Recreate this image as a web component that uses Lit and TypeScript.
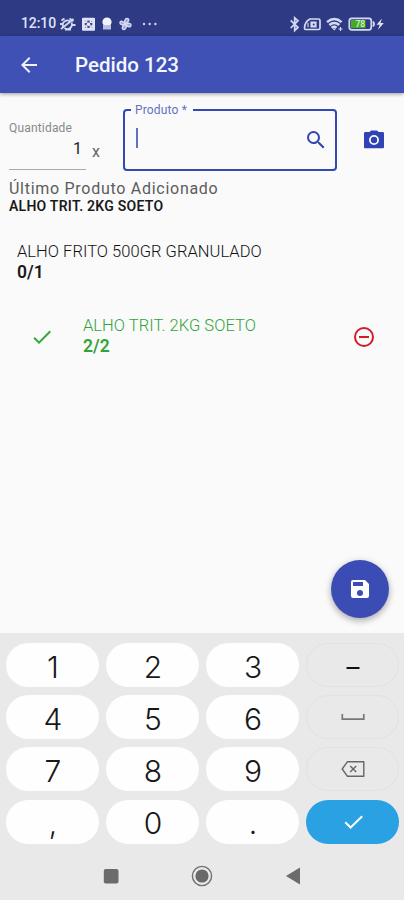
import { LitElement, html, css } from "lit";
import { customElement } from "lit/decorators.js";

const KEYS = ["1", "2", "3", "minus", "4", "5", "6", "space", "7", "8", "9", "erase", ",", "0", ".", "enter"];

const glyphs: Record<string, unknown> = {
  minus: html`<svg width="40" height="30" viewBox="0 0 40 30"><path d="M13.5 18h13" stroke="#111" stroke-width="2" /></svg>`,
  space: html`<svg width="40" height="30" viewBox="0 0 40 30"><path d="M9.300 12v5.200h21.500V12" fill="none" stroke="#777" stroke-width="1.700" /></svg>`,
  erase: html`<svg width="40" height="30" viewBox="0 0 40 30" fill="none" stroke="#666" stroke-width="1.400"><path d="M14.500 7.700h16.300v14.600H14.500L9.200 15z" stroke-linejoin="round" /><path d="m17.200 12 6 6m0-6-6 6" /></svg>`,
  enter: html`<svg width="40" height="30" viewBox="0 0 40 30"><path d="m12.300 15.200 5.300 5.300L29.200 9.200" fill="none" stroke="#fff" stroke-width="2" /></svg>`,
};

@customElement("status-bar")
class StatusBar extends LitElement {
  static styles = css`
    :host { display: flex; justify-content: space-between; height: 36px; box-sizing: border-box; padding: 11px 19px 0 21px; background: #2e3b84; color: #dfe3f8; font: 500 14px/25px Roboto, sans-serif; }
    .side { display: flex; align-items: center; height: 25px; }
    .time { width: 37px; letter-spacing: -0.100px; white-space: nowrap; }
    svg { display: block; flex: none; }
  `;
  render() {
    return html`
      <div class="side">
        <span class="time">12:10</span>
        <svg width="100" height="18" viewBox="58 14 100 18" fill="none" stroke="#d5daf3" stroke-width="1.800">
          <path d="M63 25.500a4.600 4.600 0 0 1 7.500-4.800M71.500 21.500a4.600 4.600 0 0 1-7 5.500M61.500 19.500l3-2M69.500 17.500l4 2.800M60 23h2.500M72.500 24h3M61 28l12.500-10M65 28.500h6" />
          <rect x="82" y="16.800" width="13" height="13" rx="1" fill="#dfe3f8" stroke="none" />
          <path d="M88.500 19.500v7.500M84.800 23.200h7.500" stroke="#3c4888" stroke-width="2.200" />
          <circle cx="88.500" cy="23.200" r="1.700" fill="#eef" stroke="none" />
          <path d="m85 19.500 1 1m5.200 5.200 1 1M85 27l1-1m5.200-5.200 1-1" stroke="#8089b8" stroke-width="1" />
          <circle cx="107" cy="21" r="4.600" fill="#f1f3fb" stroke="none" />
          <path d="M103 24v4.500h8V24" fill="#b9c0df" stroke="none" />
          <path d="M125.500 23c-1.500-3-.5-5.500 1.500-5.500 2.500 0 2.500 3-1.500 5.500 3-1.500 5.500-.5 5.500 1 0 2.500-3 2.500-5.500-1 1.500 3 .5 5.500-1.500 5.500-2.500 0-2.500-3 1.500-5.500-3 1.500-5.500.5-5.500-1 0-2.500 3-2.500 5.500 1z" fill="#9aa3cf" stroke-width="1.400" />
          <g fill="#cdd3f0" stroke="none"><circle cx="144" cy="23" r="1.200" /><circle cx="149.700" cy="23" r="1.200" /><circle cx="155.400" cy="23" r="1.200" /></g>
        </svg>
      </div>
      <div class="side">
        <svg width="97" height="18" viewBox="288 14 97 18" fill="none" stroke="#d5daf3" stroke-width="1.700">
          <path d="m290.700 19.300 7.300 7.200-3.300 3V16.800l3.300 3-7.300 7.200" />
          <path d="M310 18h8.500q1.500 0 1.500 1.500v7.500q0 1.500-1.500 1.500h-13q-1 0-1-1.500 0-6 5.500-9z" stroke-width="1.700" />
          <path d="M311 21h5v5h-5zm-3 .8v4.500" fill="#d5daf3" stroke-width="1.100" />
          <circle cx="313.700" cy="23.400" r="1" fill="#2e3b84" stroke="none" />
          <path d="M327 21.200q7.300-6.200 14.600 0M329.300 24q5-4.200 10 0M331.600 26.700q2.600-2 5 0" stroke-width="2.400" />
          <path d="m332.500 27.500 1.800 2 1.800-2z" fill="#dfe3f8" stroke="none" /><path d="M338.500 28h4m-2-2v4" stroke-width="1.100" />
          <rect x="349.300" y="17.300" width="22" height="11.500" rx="2.500" />
          <path d="M373 20.500q2.200 2.500 0 5" />
          <rect x="351" y="19" width="14.500" height="8.200" fill="#47a928" stroke="none" />
          <text x="355.500" y="26.200" fill="#d9f5d0" stroke="none" font-family="Roboto, sans-serif" font-size="8.500" font-weight="500">78</text>
          <path d="m382 17.500-5.500 6.300h3.200l-1.700 5 5.800-6.800h-3.300z" fill="#dfe3f8" stroke="none" />
        </svg>
      </div>`;
  }
}

@customElement("number-pad")
class NumberPad extends LitElement {
  static styles = css`
    :host { display: block; height: 267px; box-sizing: border-box; padding: 10px 5px 0 6px; background: #e9e9e9; }
    .grid { display: grid; grid-template-columns: repeat(4, 93px); column-gap: 7px; grid-auto-rows: 44px; row-gap: 8.200px; }
    .key { display: flex; align-items: center; justify-content: center; box-sizing: border-box; border-radius: 22px; background: #fefefe; color: #181818; font: 300 30px/44px Inter, sans-serif; padding: 3px 0 0 1px; }
    .dim { background: #e9e9e9; border: 1px solid #e2e2e2; padding: 0; }
    .enter { background: #29a1e3; border: 0; padding: 0; }
    .nav { display: flex; justify-content: space-between; align-items: center; height: 24px; margin: 20.500px 98px 0 97px; }
    svg { display: block; }
  `;
  render() {
    return html`
      <div class="grid">
        ${KEYS.map((k) => html`<div class="key ${glyphs[k] ? "dim" : ""} ${k === "enter" ? "enter" : ""}">${glyphs[k] ?? k}</div>`)}
      </div>
      <div class="nav">
        <svg width="16" height="16"><rect x="0.800" y="1" width="14.700" height="14.500" rx="2" fill="#6b6b6b" /></svg>
        <svg width="24" height="24"><circle cx="12" cy="12" r="9.600" fill="none" stroke="#707070" stroke-width="1.400" /><circle cx="12" cy="12" r="6.600" fill="#696969" /></svg>
        <svg width="16" height="20"><path d="M15 1.500v17L1 10z" fill="#6b6b6b" /></svg>
      </div>`;
  }
}

@customElement("app-root")
class AppRoot extends LitElement {
  static styles = css`
    :host { display: flex; flex-direction: column; width: 404px; height: 900px; overflow: hidden; background: #fafafa; font-family: Roboto, sans-serif; color: #222; }
    svg { display: block; flex: none; }
    status-bar, number-pad, .bar { flex: none; }
    .bar { display: flex; align-items: center; height: 57px; padding-left: 17px; background: #3f51b5; box-shadow: 0 1px 4px rgba(0, 0, 0, 0.4); color: #f4f6ff; z-index: 1; }
    .title { margin-left: 34px; font-size: 20.500px; font-weight: 500; line-height: 28px; letter-spacing: 0; }
    main { flex: 1; min-height: 0; display: flex; flex-direction: column; }
    .form { display: flex; height: 78px; padding: 0 18px 0 9px; align-items: flex-start; }
    .qty { width: 77px; height: 77px; box-sizing: border-box; border-bottom: 1px solid #aaa; padding-top: 28px; }
    .label { font-size: 12px; line-height: 14px; letter-spacing: 0.180px; color: #888; }
    .one { text-align: right; font-size: 16px; line-height: 20px; padding: 4px 4px 0 0; }
    .times { margin: 50px 0 0 6px; width: 22px; font-size: 16px; line-height: 18px; color: #666; }
    .product { position: relative; display: flex; align-items: center; justify-content: space-between; width: 214px; height: 62px; box-sizing: border-box; margin: 16px 0 0 9px; border: 2px solid #3448b4; border-radius: 4px; padding: 0 7px 0 10.500px; }
    .legend { position: absolute; left: 6px; top: -8px; padding: 0 6px 0 4px; background: #fafafa; font-size: 12px; line-height: 14px; letter-spacing: 0.170px; color: #6571c3; }
    .caret { width: 2px; height: 20px; margin-bottom: 4px; background: #6270c4; }
    .camera { margin: 34.500px 0 0 25px; }
    .last { padding: 8px 9px 0; color: #5c5c5c; font-size: 16px; line-height: 20px; letter-spacing: 0.720px; }
    .name { padding: 0 9px; font-size: 14px; line-height: 15px; font-weight: 600; color: #1a1a1a; letter-spacing: 0.250px; }
    .item { display: flex; align-items: center; }
    .first { padding: 27px 17px 0; }
    .desc { font-size: 16.500px; line-height: 21px; font-weight: 300; color: #111; letter-spacing: 0.040px; white-space: nowrap; }
    .count { font-size: 17.500px; line-height: 21px; font-weight: 600; color: #1a1a1a; }
    .second { padding: 32px 28.500px 0 29.500px; }
    .second .body { flex: 1; margin-left: 29.500px; }
    .second .desc, .second .count { color: #2fa437; }
    .second svg { margin-top: 2px; }
    .save { display: flex; align-items: center; justify-content: center; align-self: flex-end; flex: none; width: 58px; height: 58px; margin: auto 15.500px 15.500px 0; border-radius: 50%; background: #3b4db5; box-shadow: 0 3px 6px rgba(0, 0, 0, 0.250), 0 1px 9px rgba(0, 0, 0, 0.100); }
  `;
  render() {
    return html`
      <status-bar></status-bar>
      <header class="bar">
        <svg width="24" height="24" viewBox="0 0 24 24" fill="#eef1ff"><path d="M20 11H7.830l5.590-5.590L12 4l-8 8 8 8 1.410-1.410L7.830 13H20z" /></svg>
        <span class="title">Pedido 123</span>
      </header>
      <main>
        <section class="form">
          <div class="qty"><div class="label">Quantidade</div><div class="one">1</div></div>
          <span class="times">x</span>
          <div class="product">
            <span class="legend">Produto *</span>
            <span class="caret"></span>
            <svg width="24" height="24" viewBox="0 0 24 24" fill="#3444ae"><path d="M15.500 14h-.790l-.280-.270A6.470 6.470 0 0 0 16 9.500 6.500 6.500 0 1 0 9.500 16c1.610 0 3.090-.590 4.230-1.570l.270.280v.790l5 4.990L20.490 19zm-6 0a4.500 4.500 0 1 1 0-9 4.500 4.500 0 0 1 0 9z" /></svg>
          </div>
          <svg class="camera" width="24" height="24" viewBox="0 0 24 24" fill="#2f43b4"><circle cx="12" cy="12" r="3.200" /><path d="M9 2.500 7.500 4H3.500C2.500 4 2 4.500 2 5.500v13.500c0 .8.500 1.300 1.300 1.300h17.400c.8 0 1.300-.5 1.300-1.300V5.500c0-1-.5-1.500-1.500-1.500h-4L15 2.500zm3 14.500a5 5 0 1 1 0-10 5 5 0 0 1 0 10z" /></svg>
        </section>
        <div class="last">Último Produto Adicionado</div>
        <div class="name">ALHO TRIT. 2KG SOETO</div>
        <div class="first"><div class="desc">ALHO FRITO 500GR GRANULADO</div><div class="count">0/1</div></div>
        <div class="item second">
          <svg width="24" height="24" viewBox="0 0 24 24" fill="#35a83c"><path d="M9 16.170 4.830 12l-1.420 1.410L9 19 21 7l-1.410-1.410z" /></svg>
          <div class="body"><div class="desc">ALHO TRIT. 2KG SOETO</div><div class="count">2/2</div></div>
          <svg width="24" height="24" viewBox="0 0 24 24" fill="#cc2029"><path d="M7 11v2h10v-2zm5-9a10 10 0 1 0 0 20 10 10 0 0 0 0-20zm0 18a8 8 0 1 1 0-16 8 8 0 0 1 0 16z" /></svg>
        </div>
        <div class="save"><svg width="24" height="24" viewBox="0 0 24 24" fill="#fff"><path d="M17 3H5a2 2 0 0 0-2 2v14a2 2 0 0 0 2 2h14a2 2 0 0 0 2-2V7zm-5 16a3 3 0 1 1 0-6 3 3 0 0 1 0 6zm3-10H5V5h10z" /></svg></div>
      </main>
      <number-pad></number-pad>`;
  }
}
